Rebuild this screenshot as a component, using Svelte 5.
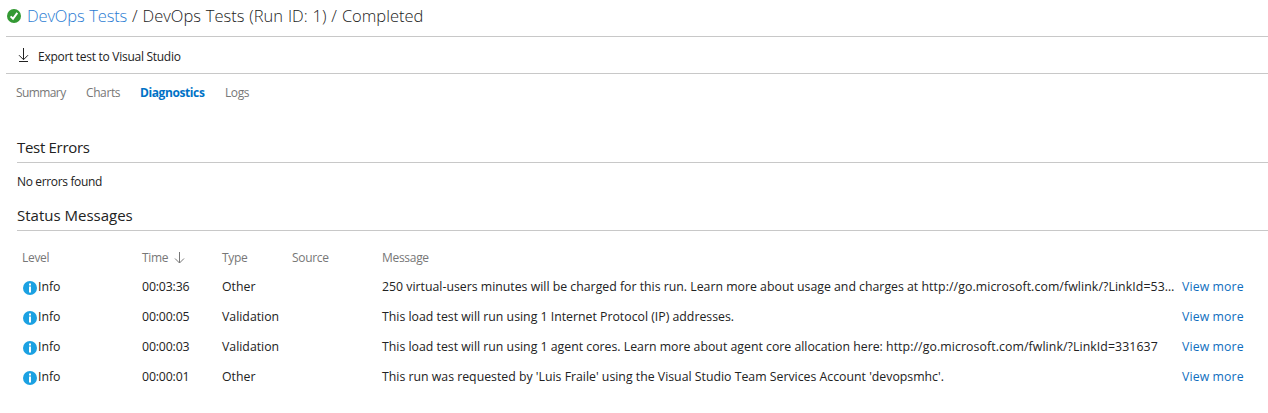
<script>
  const tabs = ['Summary', 'Charts', 'Diagnostics', 'Logs'];
  const active = 'Diagnostics';
  const rows = [
    { time: '00:03:36', type: 'Other', source: '', message: '250 virtual-users minutes will be charged for this run. Learn more about usage and charges at http://go.microsoft.com/fwlink/?LinkId=53…' },
    { time: '00:00:05', type: 'Validation', source: '', message: 'This load test will run using 1 Internet Protocol (IP) addresses.' },
    { time: '00:00:03', type: 'Validation', source: '', message: 'This load test will run using 1 agent cores. Learn more about agent core allocation here: http://go.microsoft.com/fwlink/?LinkId=331637' },
    { time: '00:00:01', type: 'Other', source: '', message: "This run was requested by 'Luis Fraile' using the Visual Studio Team Services Account 'devopsmhc'." }
  ];
  const split = (text) => {
    const at = text.indexOf('http');
    return at < 0 ? [text, ''] : [text.slice(0, at), text.slice(at)];
  };
</script>

<main>
  <header>
    <svg class="ok" width="14" height="14" viewBox="0 0 14 14">
      <circle cx="7" cy="7" r="7" fill="#339933" />
      <path d="M3.6 7.4 6 9.8 10.3 3.9" fill="none" stroke="#fff" stroke-width="2" />
    </svg>
    <h1><a href="#tests">DevOps Tests</a> / DevOps Tests (Run ID: 1) / Completed</h1>
  </header>

  <div class="toolbar">
    <svg width="11" height="15" viewBox="0 0 11 15" fill="none" stroke="#222">
      <path d="M5.5 0V11.5M1 7.2 5.5 11.7 10 7.2M1 13.5H10" />
    </svg>
    <span>Export test to Visual Studio</span>
  </div>

  <nav>
    {#each tabs as tab}
      <span class="tab {tab.toLowerCase()}" class:active={tab === active}>{tab}</span>
    {/each}
  </nav>

  <section>
    <h2 class="errors">Test Errors</h2>
    <p>No errors found</p>
    <h2>Status Messages</h2>
    <div class="grid">
      <div class="row head">
        <span>Level</span>
        <span class="time">Time
          <svg width="11" height="12" viewBox="0 0 11 12" fill="none" stroke="#777"><path d="M5.5 0V11M1 6.5 5.5 11 10 6.5" /></svg>
        </span>
        <span>Type</span><span>Source</span><span>Message</span>
      </div>
      {#each rows as row}
        <div class="row">
          <span class="level">
            <svg width="14" height="14" viewBox="0 0 14 14">
              <circle cx="7" cy="7" r="7" fill="#1ba1e2" />
              <path d="M6 2.5H8V4.5H6ZM6 5.6H8V11.5H6Z" fill="#fff" />
            </svg><span>Info</span>
          </span>
          <span class="clock">{row.time}</span>
          <span>{row.type}</span>
          <span>{row.source}</span>
          <span class="message">{split(row.message)[0]}<span class="url">{split(row.message)[1]}</span></span>
          <a class="more" href="#more">View more</a>
        </div>
      {/each}
    </div>
  </section>
</main>

<style>
  :global(body) { background: #fff; }
  main {
    box-sizing: border-box;
    height: 413px;
    overflow: hidden;
    padding-left: 6px;
    font: 12px/20px "Segoe UI", "Open Sans", "Noto Sans", sans-serif;
    color: #222;
  }
  svg { display: block; flex: none; }
  a { color: #106ebe; text-decoration: none; }
  header { display: flex; height: 36px; border-bottom: 1px solid #c8c8c8; }
  .ok { margin: 9px 6px 0 1px; }
  h1 { margin: 4px 0 0; font-size: 16.5px; line-height: 24px; font-weight: 300; white-space: nowrap; word-spacing: 0.6px; }
  h1 a { color: #2b7cd3; letter-spacing: -0.15px; }
  .toolbar { display: flex; height: 36px; border-bottom: 1px solid #c8c8c8; }
  .toolbar svg { margin: 11px 9px 0 12px; }
  .toolbar span { margin-top: 10px; letter-spacing: -0.28px; }
  nav { display: flex; padding: 9px 0 0 10px; height: 55px; box-sizing: border-box; color: #777; letter-spacing: -0.4px; }
  .tab { width: 70px; }
  .summary { letter-spacing: -0.6px; }
  .diagnostics { width: 85px; margin-left: -16px; }
  .active { color: #0072c6; font-weight: 700; }
  section { padding-left: 11px; }
  h2 { box-sizing: border-box; height: 34px; margin: 0; padding-top: 7px; font-size: 15px; line-height: 22px; font-weight: 400; border-bottom: 1px solid #c8c8c8; }
  .errors { letter-spacing: -0.3px; }
  p { margin: 0; padding: 9px 0 5px; letter-spacing: -0.35px; }
  .row { display: grid; grid-template-columns: 120px 80px 70px 90px 800px 80px; height: 30px; line-height: 30px; padding-left: 5px; white-space: nowrap; font-size: 12.3px; }
  .grid { padding-top: 12px; }
  .head { height: 29px; line-height: 30px; color: #777; font-size: 12px; letter-spacing: -0.3px; }
  .clock { letter-spacing: -0.15px; }
  .time { display: flex; gap: 6px; }
  .time svg { margin-top: 9px; }
  .level { display: flex; gap: 1px; }
  .level svg { margin: 9px 0 0 1px; }
  .url { letter-spacing: 0.09px; }
  .more { letter-spacing: 0.1px; }
</style>
